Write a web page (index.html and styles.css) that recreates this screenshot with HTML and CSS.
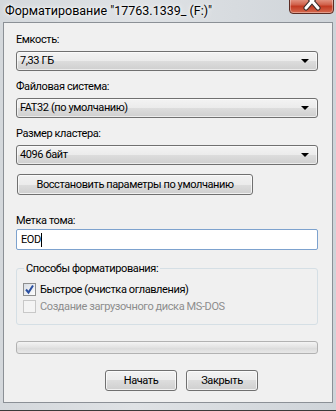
FILE: index.html
```html
<!DOCTYPE html>
<html lang="ru">
<head>
  <meta charset="UTF-8" />
  <title>Форматирование</title>
  <link rel="stylesheet" href="styles.css">
</head>
<body>
  <div class="window">
    <div class="titlebar">
      <span class="title">Форматирование "17763.1339_ (F:)"</span>
      <div class="btn-close">
        <svg width="20" height="16" viewBox="0 0 20 16">
          <path d="M4 -4 L16 10 M16 -4 L4 10" stroke="#3a2a28" stroke-width="5" stroke-linecap="round"/>
          <path d="M4 -4 L16 10 M16 -4 L4 10" stroke="#fff" stroke-width="3" stroke-linecap="round"/>
        </svg>
      </div>
    </div>

    <div class="client">
      <div class="field">
        <label>Емкость:</label>
        <div class="combo"><span>7,33 ГБ</span><i class="arrow"></i></div>
      </div>
      <div class="field">
        <label>Файловая система:</label>
        <div class="combo"><span>FAT32 (по умолчанию)</span><i class="arrow"></i></div>
      </div>
      <div class="field">
        <label>Размер кластера:</label>
        <div class="combo"><span>4096 байт</span><i class="arrow"></i></div>
      </div>

      <button class="btn btn-restore">Восстановить параметры по умолчанию</button>

      <div class="field field-label">
        <label>Метка тома:</label>
        <div class="textbox">EOD<span class="caret"></span></div>
      </div>

      <fieldset class="group">
        <legend>Способы форматирования:</legend>
        <div class="check">
          <span class="box checked">
            <svg width="11" height="11" viewBox="0 0 11 11">
              <path d="M2 5.5 L4.5 8.5 L9 1.5" fill="none" stroke="#2a4fa0" stroke-width="2"/>
            </svg>
          </span>
          Быстрое (очистка оглавления)
        </div>
        <div class="check disabled">
          <span class="box"></span>
          Создание загрузочного диска MS-DOS
        </div>
      </fieldset>

      <div class="progress"></div>

      <div class="actions">
        <button class="btn">Начать</button>
        <button class="btn">Закрыть</button>
      </div>
    </div>
    <div class="frame-bottom"></div>
  </div>
</body>
</html>
```

FILE: styles.css
```css
body, html {
  margin: 0;
  padding: 0;
  width: 336px;
  height: 411px;
  overflow: hidden;
  background: #fff;
  font-family: Roboto, 'Noto Sans', sans-serif;
  font-size: 11px;
  letter-spacing: -0.4px;
  color: #000;
}

.window {
  width: 336px;
  height: 410px;
  background: linear-gradient(to right, #d4d8dc, #dfe2e5 40%, #cfd4d9);
  border-bottom: 1px solid #3a3a3a;
  position: relative;
}

.titlebar {
  height: 22px;
  position: relative;
}

.title {
  display: block;
  padding: 3px 0 0 5px;
  line-height: 16px;
  font-size: 12.5px;
  letter-spacing: 0;
  text-shadow: 0 0 6px #fff, 0 0 3px #fff;
}

.btn-close {
  position: absolute;
  top: -3px;
  left: 289px;
  width: 43px;
  height: 15px;
  border: 1px solid #5b2c24;
  border-radius: 0 0 4px 4px;
  background: linear-gradient(#e9a594, #d0604a 45%, #c23a22 55%, #d66a4f);
  box-shadow: inset 0 0 0 1px rgba(255, 255, 255, 0.35);
  text-align: center;
}

.btn-close svg {
  display: block;
  margin: 0 auto;
}

.client {
  margin-left: 3px;
  width: 330px;
  height: 381px;
  box-sizing: border-box;
  border: 1px solid #8b9096;
  background: #f0f0f0;
  padding: 9px 14px 0 12px;
}

.field {
  margin-bottom: 8px;
}

.field label {
  display: block;
  line-height: 15px;
  height: 15px;
  margin-bottom: 4px;
}

.combo {
  height: 20px;
  box-sizing: border-box;
  border: 1px solid #707070;
  border-radius: 3px;
  background: linear-gradient(#f3f3f3, #ebebeb 50%, #dddddd 50%, #cfcfcf);
  box-shadow: inset 0 0 0 1px rgba(255, 255, 255, 0.6);
  display: flex;
  align-items: center;
  justify-content: space-between;
  padding: 0 8px 0 3px;
}

.combo span {
  line-height: 16px;
}

.arrow {
  width: 0;
  height: 0;
  border-left: 4px solid transparent;
  border-right: 4px solid transparent;
  border-top: 4px solid #000;
}

.btn {
  font-family: inherit;
  font-size: 11px;
  letter-spacing: -0.4px;
  color: #000;
  height: 21px;
  box-sizing: border-box;
  border: 1px solid #707070;
  border-radius: 3px;
  background: linear-gradient(#f2f2f2, #ebebeb 50%, #dddddd 50%, #cfcfcf);
  box-shadow: inset 0 0 0 1px rgba(255, 255, 255, 0.7);
  padding: 0;
  line-height: 17px;
  white-space: nowrap;
}

.btn-restore {
  display: block;
  width: 236px;
  margin: 9px 0 0 1px;
}

.field-label {
  margin-top: 18px;
}

.field-label label {
  margin-bottom: 1px;
}

.textbox {
  height: 21px;
  box-sizing: border-box;
  border: 1px solid #7da2ce;
  border-radius: 2px;
  background: #fff;
  padding: 0 4px;
  line-height: 19px;
  display: flex;
  align-items: center;
}

.caret {
  display: inline-block;
  width: 1px;
  height: 14px;
  background: #000;
}

.group {
  margin: 11px 0 0;
  border: 1px solid #d5dfe5;
  border-radius: 3px;
  padding: 5px 0 4px 6px;
  height: 64px;
  box-sizing: border-box;
}

.group legend {
  padding: 0 2px;
  margin-left: 1px;
  line-height: 15px;
}

.check {
  display: flex;
  align-items: center;
  gap: 4px;
  line-height: 17px;
  height: 17px;
}

.check.disabled {
  color: #8d8d8d;
}

.box {
  width: 11px;
  height: 11px;
  border: 1px solid #8f8f8f;
  background: linear-gradient(135deg, #dcdcdc, #fbfbfb);
  display: flex;
  align-items: center;
  justify-content: center;
}

.box.checked {
  border-color: #8e8f8f;
  background: linear-gradient(135deg, #d8dde4, #fdfdfd);
}

.check.disabled .box {
  border-color: #c8c8c8;
  background: #f4f4f4;
}

.progress {
  margin-top: 16px;
  height: 13px;
  box-sizing: border-box;
  border: 1px solid #b2b2b2;
  border-radius: 3px;
  background: linear-gradient(#f4f4f4, #e2e2e2 50%, #dcdcdc 60%, #e8e8e8);
}

.actions {
  display: flex;
  gap: 9px;
  padding-left: 89px;
  margin-top: 16px;
}

.actions .btn {
  width: 72px;
}

.frame-bottom {
  height: 6px;
}
```
